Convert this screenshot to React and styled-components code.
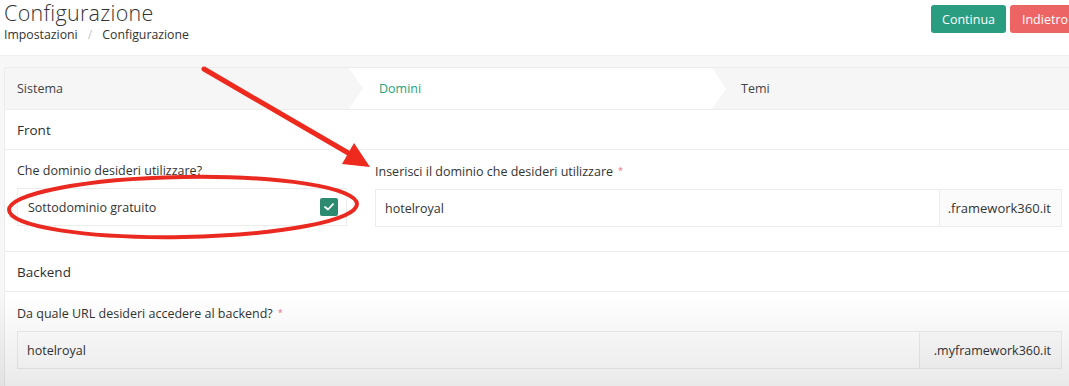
import React from "react";
import styled, { createGlobalStyle } from "styled-components";

const Global = createGlobalStyle`
  html, body { margin: 0; padding: 0; background: #f7f7f7; overflow: hidden; }
  body { font-family: "Open Sans", "Noto Sans", sans-serif; color: #333; }
  * { box-sizing: border-box; }
`;

const Page = styled.div`
  position: relative;
  width: 1080px;
  height: 386px;
  overflow: hidden;
`;

const Header = styled.header`
  display: flex;
  justify-content: space-between;
  align-items: flex-start;
  height: 56px;
  padding: 0 0 0 4px;
  background: #fff;
  border-bottom: 1px solid #f0f0f0;
`;

const TitleBlock = styled.div`
  display: flex;
  flex-direction: column;
`;

const Title = styled.h1`
  margin: 0;
  font-size: 21.5px;
  line-height: 26px;
  font-weight: 300;
  color: #333;
  letter-spacing: 0.3px;
`;

const Crumbs = styled.nav`
  display: flex;
  gap: 10px;
  font-size: 12.3px;
  line-height: 16px;
  margin-top: 1px;
  color: #333;
`;

const Sep = styled.span`
  color: #c8c8c8;
`;

const Actions = styled.div`
  display: flex;
  gap: 4px;
  padding-top: 5px;
`;

const Btn = styled.button`
  height: 28px;
  padding: 0 11px;
  border: 0;
  border-radius: 3px;
  color: #fff;
  font-family: inherit;
  font-size: 12.5px;
  background: ${(p) => (p.$variant === "danger" ? "#ec6464" : "#2a9c80")};
  min-width: ${(p) => (p.$variant === "danger" ? "70px" : "74px")};
`;

const Card = styled.section`
  margin: 11px 0 0 4px;
  width: 1071px;
  background: #fff;
  border: 1px solid #ececec;
`;

const Tabs = styled.div`
  display: flex;
  height: 42px;
  background: #f6f6f6;
  border-bottom: 1px solid #ececec;
`;

const Tab = styled.div`
  position: relative;
  display: flex;
  align-items: center;
  width: ${(p) => p.$w}px;
  flex: ${(p) => (p.$grow ? "1" : "none")};
  padding-left: ${(p) => p.$pl}px;
  font-size: 12.5px;
  color: ${(p) => (p.$active ? "#24a37d" : "#444")};
  background: ${(p) => (p.$active ? "#fff" : "transparent")};
  clip-path: ${(p) =>
    p.$active
      ? "polygon(0 0, calc(100% - 14px) 0, 100% 50%, calc(100% - 14px) 100%, 0 100%, 14px 50%)"
      : "none"};
  margin-left: ${(p) => (p.$active ? "-14px" : "0")};
`;

const SectionHead = styled.div`
  display: flex;
  align-items: center;
  height: 40px;
  padding-left: 12px;
  font-size: 13.5px;
  font-weight: 500;
  color: #2f2f2f;
  border-bottom: 1px solid #ececec;
`;

const SectionBody = styled.div`
  display: grid;
  grid-template-columns: ${(p) => p.$cols};
  column-gap: 28px;
  padding: 14px 12px 24px 12px;
  border-bottom: ${(p) => (p.$last ? "0" : "1px solid #ececec")};
`;

const Field = styled.div`
  display: flex;
  flex-direction: column;
  gap: 10px;
`;

const Label = styled.label`
  font-size: 12.5px;
  line-height: 14px;
  font-weight: 500;
  color: #333;
`;

const Star = styled.span`
  color: #e57080;
  font-size: 9px;
  margin-left: 5px;
  vertical-align: 2px;
`;

const SelectBox = styled.div`
  display: flex;
  align-items: center;
  justify-content: space-between;
  height: 38px;
  padding: 0 8px 0 10px;
  border: 1px solid #ececec;
  font-size: 12.5px;
  color: #333;
`;

const Check = styled.span`
  display: flex;
  align-items: center;
  justify-content: center;
  width: 18px;
  height: 18px;
  background: #2c8a70;
  border-radius: 2px;
`;

const Group = styled.div`
  display: flex;
  height: 38px;
  border: 1px solid #ececec;
`;

const Input = styled.div`
  flex: 1;
  display: flex;
  align-items: center;
  padding-left: 9px;
  font-size: 12.5px;
  color: #333;
  background: #fff;
`;

const Addon = styled.div`
  display: flex;
  align-items: center;
  justify-content: flex-end;
  width: ${(p) => p.$w}px;
  padding-right: 10px;
  border-left: 1px solid #ececec;
  background: #fbfbfb;
  font-size: ${(p) => p.$fs || 12.5}px;
  color: #333;
`;

const Shade = styled.div`
  position: absolute;
  left: 0;
  right: 0;
  top: 296px;
  bottom: 0;
  background: linear-gradient(rgba(0, 0, 0, 0), rgba(0, 0, 0, 0.085));
  pointer-events: none;
`;

const Marks = styled.svg`
  position: absolute;
  left: 0;
  top: 0;
  pointer-events: none;
`;

export default function App() {
  return (
    <Page>
      <Global />
      <Header>
        <TitleBlock>
          <Title>Configurazione</Title>
          <Crumbs>
            <span>Impostazioni</span>
            <Sep>/</Sep>
            <span>Configurazione</span>
          </Crumbs>
        </TitleBlock>
        <Actions>
          <Btn>Continua</Btn>
          <Btn $variant="danger">Indietro</Btn>
        </Actions>
      </Header>

      <Card>
        <Tabs>
          <Tab $w={358} $pl={12}>
            Sistema
          </Tab>
          <Tab $w={377} $pl={30} $active>
            Domini
          </Tab>
          <Tab $grow $pl={15}>
            Temi
          </Tab>
        </Tabs>

        <SectionHead>Front</SectionHead>
        <SectionBody $cols="330px 1fr">
          <Field>
            <Label>Che dominio desideri utilizzare?</Label>
            <SelectBox>
              <span>Sottodominio gratuito</span>
              <Check>
                <svg width="10" height="8" viewBox="0 0 10 8">
                  <polyline points="1,4 4,6.5 9,1.2" fill="none" stroke="#fff" strokeWidth="1.8" strokeLinecap="round" strokeLinejoin="round" />
                </svg>
              </Check>
            </SelectBox>
          </Field>
          <Field>
            <Label>
              Inserisci il dominio che desideri utilizzare<Star>*</Star>
            </Label>
            <Group>
              <Input>hotelroyal</Input>
              <Addon $w={122} $fs={13}>.framework360.it</Addon>
            </Group>
          </Field>
        </SectionBody>

        <SectionHead>Backend</SectionHead>
        <SectionBody $cols="1fr" $last>
          <Field>
            <Label>
              Da quale URL desideri accedere al backend?<Star>*</Star>
            </Label>
            <Group>
              <Input>hotelroyal</Input>
              <Addon $w={142}>.myframework360.it</Addon>
            </Group>
          </Field>
        </SectionBody>
      </Card>

      <Shade />

      <Marks width="1069" height="386" viewBox="0 0 1069 386">
        <line x1="204" y1="69" x2="350" y2="154" stroke="#ee2a1f" strokeWidth="5" strokeLinecap="round" />
        <polygon points="370,167 342,164 354,143" fill="#ee2a1f" />
        <ellipse cx="183" cy="207" rx="174" ry="30" fill="none" stroke="#ea2a20" strokeWidth="4" transform="rotate(-1 183 207)" />
      </Marks>
    </Page>
  );
}
